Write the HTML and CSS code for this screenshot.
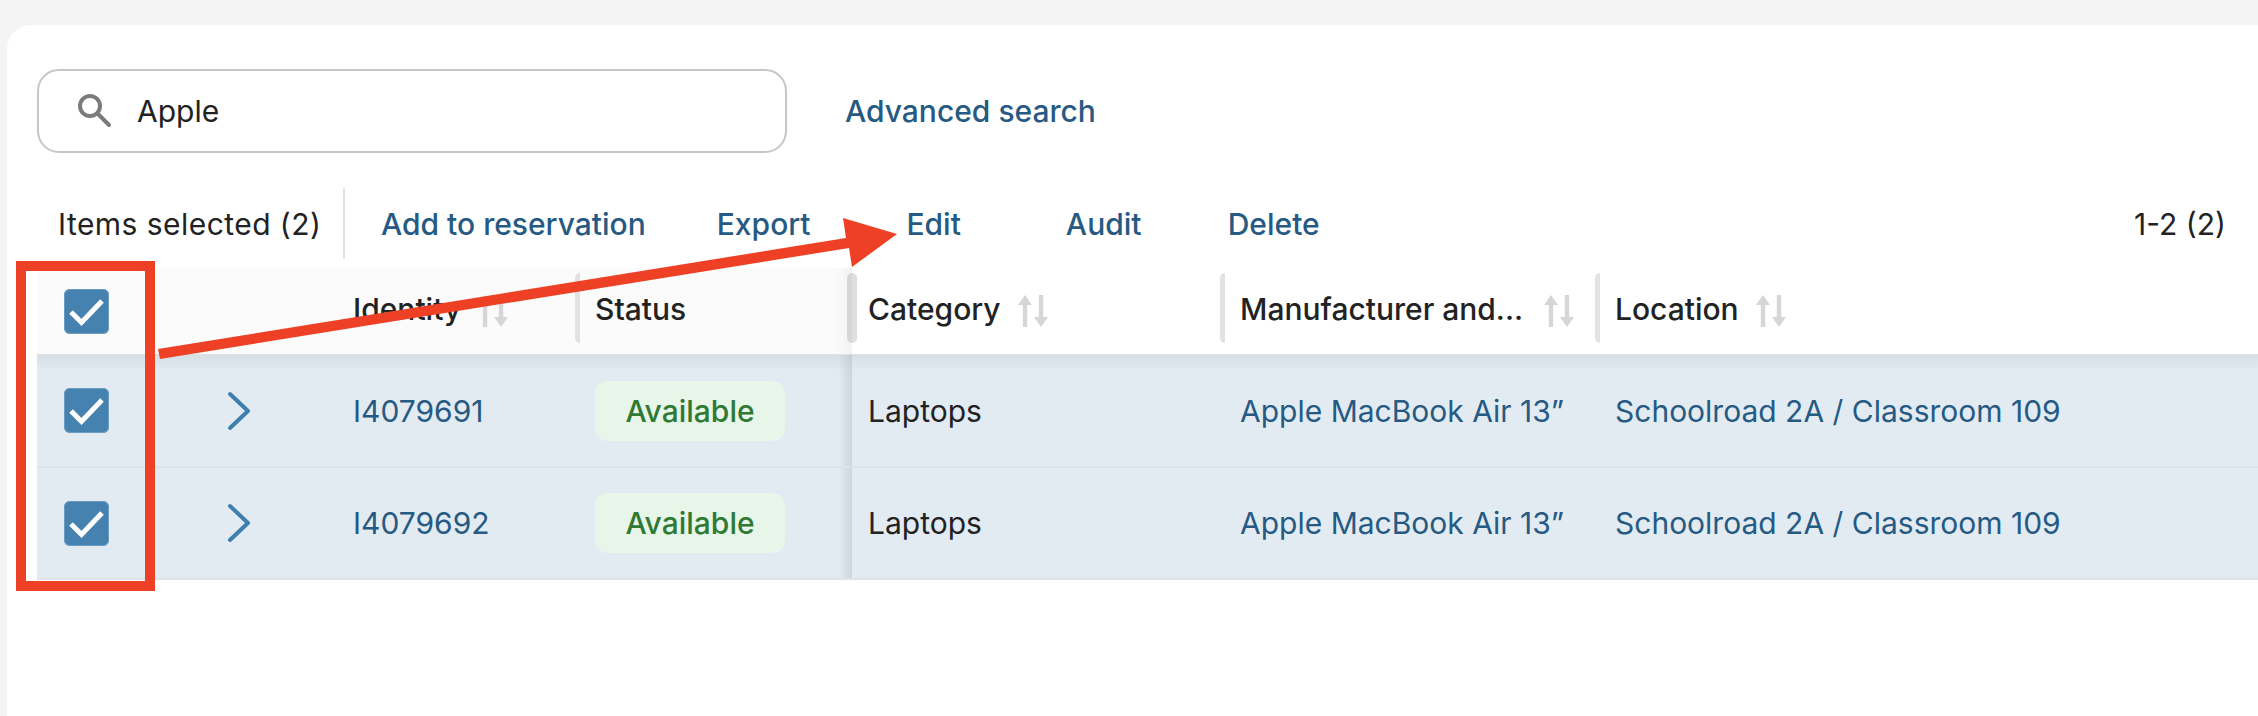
FILE: index.html
```html
<!DOCTYPE html>
<html lang="en">
<head>
<meta charset="utf-8">
<title>Items</title>
<link rel="stylesheet" href="styles.css">
</head>
<body>
<main class="card">
  <div class="search-row">
    <div class="search">
      <svg class="search-icon" width="34" height="34" viewBox="0 0 34 34"><circle cx="12" cy="12" r="10" /><path d="M19.5 19.5 31 31" /></svg>
      <span class="search-value">Apple</span>
    </div>
    <a class="link advanced">Advanced search</a>
  </div>

  <div class="toolbar">
    <span class="selected">Items selected (2)</span>
    <span class="toolbar-divider"></span>
    <a class="link action">Add to reservation</a>
    <a class="link action">Export</a>
    <a class="link action">Edit</a>
    <a class="link action">Audit</a>
    <a class="link action">Delete</a>
    <span class="count">1-2 (2)</span>
  </div>

  <div class="table">
    <div class="row head">
      <div class="cell fixed"><span class="check"><svg width="45" height="45" viewBox="0 0 45 45"><path d="M7 23 17.500 33.500 38 12" /></svg></span></div>
      <div class="cell fixed"></div>
      <div class="cell fixed"><span class="label">Identity</span><svg class="sort" width="30" height="34" viewBox="0 0 30 34"><path d="M0 11 7 1l7 10H9.200v22H4.800V11zM16 23h4.800V1h4.400v22H30L23 33z" /></svg></div>
      <div class="cell fixed edge divided"><span class="label">Status</span></div>
      <div class="cell divided over"><span class="label">Category</span><svg class="sort" width="30" height="34" viewBox="0 0 30 34"><path d="M0 11 7 1l7 10H9.200v22H4.800V11zM16 23h4.800V1h4.400v22H30L23 33z" /></svg></div>
      <div class="cell divided"><span class="label">Manufacturer and...</span><svg class="sort sort-wide" width="30" height="34" viewBox="0 0 30 34"><path d="M0 11 7 1l7 10H9.200v22H4.800V11zM16 23h4.800V1h4.400v22H30L23 33z" /></svg></div>
      <div class="cell divided"><span class="label">Location</span><svg class="sort" width="30" height="34" viewBox="0 0 30 34"><path d="M0 11 7 1l7 10H9.200v22H4.800V11zM16 23h4.800V1h4.400v22H30L23 33z" /></svg></div>
    </div>

    <div class="row item first">
      <div class="cell"><span class="check"><svg width="45" height="45" viewBox="0 0 45 45"><path d="M7 23 17.500 33.500 38 12" /></svg></span></div>
      <div class="cell chevron-cell"><svg class="chevron" width="24" height="40" viewBox="0 0 24 40"><path d="M3 3 21 20 3 37" /></svg></div>
      <div class="cell link-text">I4079691</div>
      <div class="cell edge"><span class="badge">Available</span></div>
      <div class="cell">Laptops</div>
      <div class="cell link-text">Apple MacBook Air 13”</div>
      <div class="cell link-text">Schoolroad 2A / Classroom 109</div>
    </div>

    <div class="row item">
      <div class="cell"><span class="check"><svg width="45" height="45" viewBox="0 0 45 45"><path d="M7 23 17.500 33.500 38 12" /></svg></span></div>
      <div class="cell chevron-cell"><svg class="chevron" width="24" height="40" viewBox="0 0 24 40"><path d="M3 3 21 20 3 37" /></svg></div>
      <div class="cell link-text">I4079692</div>
      <div class="cell edge"><span class="badge">Available</span></div>
      <div class="cell">Laptops</div>
      <div class="cell link-text">Apple MacBook Air 13”</div>
      <div class="cell link-text">Schoolroad 2A / Classroom 109</div>
    </div>
  </div>
</main>

<svg class="annotation" width="2258" height="716" viewBox="0 0 2258 716">
  <rect class="annotation-box" x="21" y="266" width="129" height="320" />
  <polygon class="annotation-arrow" points="158,349 846,238 843,218 897,234 852,267 849,248 160,359" />
</svg>
</body>
</html>
```

FILE: styles.css
```css
* {
  box-sizing: border-box;
}

html,
body {
  margin: 0;
  height: 716px;
  overflow: hidden;
}

body {
  background: #f4f4f4;
  padding: 25px 0 0 7px;
  font-family: Inter, "Liberation Sans", sans-serif;
  font-size: 30px;
  color: #222;
}

.card {
  height: 691px;
  background: #fff;
  border-top-left-radius: 24px;
  padding: 44px 0 0 30px;
}

.search-row {
  display: flex;
  align-items: center;
}

.search {
  width: 750px;
  height: 84px;
  border: 2px solid #c6c6c6;
  border-radius: 22px;
  display: flex;
  align-items: center;
  padding-left: 39px;
}

.search-icon {
  fill: none;
  stroke: #7b7b7b;
  stroke-width: 4;
  stroke-linecap: round;
}

.search-value {
  margin-left: 25px;
}

.link {
  color: #265a82;
  font-weight: 500;
}

.advanced {
  margin-left: 58px;
}

.toolbar {
  display: flex;
  align-items: center;
  height: 71px;
  margin-top: 35px;
  padding-left: 21px;
}

.selected {
  width: 285px;
  letter-spacing: 0.45px;
}

.toolbar-divider {
  width: 2px;
  height: 71px;
  margin-right: 3px;
  background: #e2e2e2;
}

.action {
  min-width: 170px;
  padding: 0 33px;
  text-align: center;
}

.count {
  margin-left: auto;
  padding-right: 32px;
}

.table {
  margin-top: 9px;
}

.row {
  display: grid;
  grid-template-columns: 100px 200px 238px 277px 368px 375px 1fr;
}

.head {
  height: 87px;
  border-bottom: 1px solid #e2e0de;
  font-weight: 500;
}

.item {
  height: 112px;
  background: #e2eaf2;
  border-bottom: 2px solid #dfe3e6;
}

.first {
  height: 113px;
  background: linear-gradient(to bottom, #d6dee6, #e2eaf2 16px);
}

.cell {
  position: relative;
  display: flex;
  align-items: center;
  padding-left: 16px;
  white-space: nowrap;
}

.head .cell:first-child,
.item .cell:first-child {
  padding-left: 27px;
}

.label {
  padding-bottom: 4px;
}

.fixed {
  background: #fbfbfb;
}

.head .edge {
  background: linear-gradient(to right, #fbfbfb 94%, #f2f2f2);
}

.item .edge {
  background: linear-gradient(to right, rgba(120, 140, 160, 0) 95%, rgba(120, 140, 160, 0.22));
}

.divided::before {
  content: "";
  position: absolute;
  left: 0;
  top: 5px;
  width: 5px;
  height: 70px;
  border-radius: 5px 0 0 5px;
  background: #e2e2e2;
}

.head .divided {
  padding-left: 20px;
}

.head .over {
  padding-left: 16px;
}

.over::before {
  left: -5px;
  width: 10px;
  border-radius: 5px;
  background: rgba(150, 150, 150, 0.3);
}

.item .cell:nth-child(4),
.item .cell:nth-child(n + 6) {
  padding-left: 20px;
}

.check {
  display: block;
  width: 45px;
  height: 45px;
  border-radius: 6px;
  background: #4682b0;
  box-shadow: inset 0 0 0 1px #6a9cc2;
}

.check svg {
  display: block;
  fill: none;
  stroke: #fff;
  stroke-width: 5;
}

.chevron-cell {
  padding-left: 90px;
}

.chevron {
  fill: none;
  stroke: #3f7fb0;
  stroke-width: 4;
  stroke-linecap: round;
  stroke-linejoin: round;
}

.link-text {
  color: #265a82;
}

.badge {
  width: 190px;
  height: 60px;
  border-radius: 12px;
  background: #e8f5e9;
  color: #2f7a33;
  font-weight: 500;
  display: flex;
  align-items: center;
  justify-content: center;
}

.sort {
  margin-left: 17px;
  fill: #d6d6d6;
}

.sort-wide {
  margin-left: 21px;
}

.annotation {
  position: absolute;
  left: 0;
  top: 0;
  pointer-events: none;
}

.annotation-box {
  fill: none;
  stroke: #ee4024;
  stroke-width: 10;
}

.annotation-arrow {
  fill: #ee4024;
}
```
